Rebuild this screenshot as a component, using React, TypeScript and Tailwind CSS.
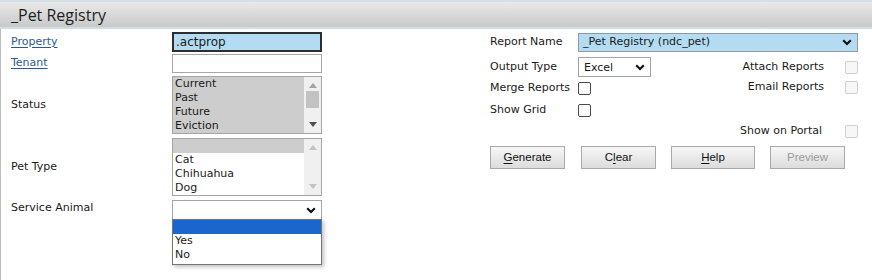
// Report filter screen: "_Pet Registry". Left column holds the
// filter fields, right column the report options and buttons.

import React from "react";

const body = "font-['DejaVu_Sans',Verdana,sans-serif] text-[11px] text-[#1a1a1a]";

function Chevron() {
  return (
    <svg width="10" height="7" viewBox="0 0 10 7" className="shrink-0">
      <polyline points="1.2,1.2 5,5 8.8,1.2" fill="none" stroke="#111" strokeWidth="2.2" />
    </svg>
  );
}

function Arrow({ up, color }: { up?: boolean; color: string }) {
  return (
    <svg width="8" height="5" viewBox="0 0 8 5">
      <polygon points={up ? "0,5 4,0 8,5" : "0,0 8,0 4,5"} fill={color} />
    </svg>
  );
}

function Checkbox({ disabled }: { disabled?: boolean }) {
  return (
    <span
      className={
        disabled
          ? "block h-[13px] w-[13px] rounded-[2px] border border-[#cfcfcf] bg-[#f7f7f7]"
          : "block h-[13px] w-[13px] rounded-[2px] border border-[#4a4a4a] bg-white"
      }
    />
  );
}

function Btn({ under, rest, pre = "", w, disabled }: {
  under: string; rest: string; pre?: string; w: string; disabled?: boolean;
}) {
  return (
    <button
      className={`${w} flex h-[23px] items-center justify-center border border-[#a9a9a9] bg-gradient-to-b from-[#f7f7f7] to-[#dcdcdc] font-['Liberation_Sans',Arial,sans-serif] text-[11.5px] ${
        disabled ? "text-[#9a9a9a]" : "text-[#111]"
      }`}
    >
      {pre}
      {disabled ? under : <span className="underline underline-offset-2">{under}</span>}
      {rest}
    </button>
  );
}

function ListBox({ items, selectedAll, firstBlank, scrollable }: {
  items: string[]; selectedAll?: boolean; firstBlank?: boolean; scrollable?: boolean;
}) {
  return (
    <div className="flex h-[58px] w-[150px] border border-[#a5a5a5] bg-white">
      <div className={`flex-1 overflow-hidden pl-[2px] leading-[14px] ${selectedAll ? "bg-[#cdcdcd]" : ""}`}>
        {firstBlank && <div className="-ml-[2px] h-[14px] bg-[#cdcdcd]" />}
        {items.map((t) => (
          <div key={t} className="h-[14px]">{t}</div>
        ))}
      </div>
      <div className="flex w-[17px] flex-col items-center justify-between bg-[#f0f0f0] py-[6px]">
        <Arrow up color={scrollable ? "#a3a3a3" : "#c2c2c2"} />
        {scrollable && <div className="mb-auto mt-[3px] h-[17px] w-[13px] bg-[#c2c2c2]" />}
        <Arrow color={scrollable ? "#505050" : "#c2c2c2"} />
      </div>
    </div>
  );
}

function Label({ children, link }: { children: React.ReactNode; link?: boolean }) {
  return (
    <div className={`w-[161px] ${link ? "text-[#2a5a95] underline underline-offset-2" : ""}`}>{children}</div>
  );
}

export default function App() {
  return (
    <div className={`h-[280px] w-[872px] overflow-hidden bg-white ${body}`}>
      <div className="h-[2px] bg-[#d6dee6]" />
      <div className="flex h-[25px] items-center bg-gradient-to-b from-[#e9e9e9] to-[#c9c9c9] pl-[11px] font-['Open_Sans',sans-serif] text-[16px] text-[#1e1e1e]">
        _Pet Registry
      </div>
      <div className="h-[2px] bg-[#d3dde7]" />

      <div className="flex h-[251px] border-l border-[#bdbdbd]">
        {/* filters */}
        <div className="w-[321px] pl-[10px] pt-[3px]">
          <div className="flex h-[20px] items-center">
            <Label link>Property</Label>
            <div className="flex h-[20px] w-[150px] items-center border-2 border-[#2e2e2e] bg-[#b3dcf2] pl-[2px] text-[12px]">
              .actprop
            </div>
          </div>
          <div className="mt-[2px] flex h-[19px] items-center">
            <Label link>Tenant</Label>
            <div className="h-[19px] w-[150px] border border-[#a5a5a5] bg-white" />
          </div>
          <div className="mt-[3px] flex items-center">
            <Label>Status</Label>
            <ListBox items={["Current", "Past", "Future", "Eviction"]} selectedAll scrollable />
          </div>
          <div className="mt-[4px] flex items-center">
            <Label>Pet Type</Label>
            <ListBox items={["Cat", "Chihuahua", "Dog"]} firstBlank />
          </div>
          <div className="relative mt-[4px] flex items-start">
            <Label>Service Animal</Label>
            <div className="flex h-[20px] w-[150px] items-center justify-end border border-[#a5a5a5] bg-white pr-[5px]">
              <Chevron />
            </div>
            {/* open dropdown */}
            <div className="absolute left-[161px] top-[19px] w-[150px] border border-[#767676] bg-white pb-[2px] leading-[14px] shadow-[2px_2px_4px_rgba(0,0,0,0.25)]">
              <div className="h-[14px] bg-[#1a66cf]" />
              <div className="h-[14px] pl-[2px]">Yes</div>
              <div className="h-[14px] pl-[2px]">No</div>
            </div>
          </div>
        </div>

        {/* report options */}
        <div className="ml-[168px] w-[368px] pt-[4px]">
          <div className="flex h-[19px] items-center">
            <div className="w-[88px]">Report Name</div>
            <div className="flex h-[19px] flex-1 items-center justify-between border border-[#8f9aa5] bg-[#b3dcf2] pl-[4px] pr-[5px]">
              <span>_Pet Registry (ndc_pet)</span>
              <Chevron />
            </div>
          </div>
          <div className="mt-[5px] flex h-[20px] items-center">
            <div className="w-[88px]">Output Type</div>
            <div className="flex h-[20px] w-[73px] items-center justify-between border border-[#a5a5a5] bg-white pl-[5px] pr-[5px]">
              <span className="pt-[2px]">Excel</span>
              <Chevron />
            </div>
            <div className="flex-1 text-right">Attach Reports</div>
            <div className="ml-[21px]"><Checkbox disabled /></div>
          </div>
          <div className="flex h-[22px] items-center">
            <div className="w-[88px]">Merge Reports</div>
            <Checkbox />
            <div className="mb-[2px] flex-1 text-right">Email Reports</div>
            <div className="mb-[2px] ml-[21px]"><Checkbox disabled /></div>
          </div>
          <div className="flex h-[22px] items-center">
            <div className="w-[88px]">Show Grid</div>
            <Checkbox />
          </div>
          <div className="flex h-[20px] items-center justify-end">
            <div className="pr-[2px] pt-[1px]">Show on Portal</div>
            <div className="ml-[21px]"><Checkbox disabled /></div>
          </div>
          <div className="mt-[5px] flex">
            <Btn w="w-[75px]" under="G" rest="enerate" />
            <Btn w="w-[75px] ml-[16px]" pre="C" under="l" rest="ear" />
            <Btn w="w-[84px] ml-[15px]" under="H" rest="elp" />
            <Btn w="w-[75px] ml-[15px]" under="P" rest="review" disabled />
          </div>
        </div>
      </div>
    </div>
  );
}
